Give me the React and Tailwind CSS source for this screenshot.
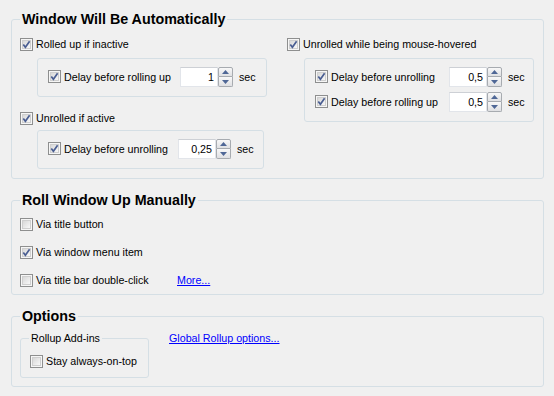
import React from 'react';

function Check({ checked }) {
  return (
    <svg width="13" height="13" viewBox="0 0 13 13" className="shrink-0">
      <defs>
        <linearGradient id="cbFill" x1="0" y1="0" x2="1" y2="1">
          <stop offset="0" stopColor="#d6d6d6" />
          <stop offset="1" stopColor="#fafafa" />
        </linearGradient>
      </defs>
      <rect x="0.5" y="0.5" width="12" height="12" fill="#f6f6f6" stroke="#8e8f8f" />
      <rect x="2.5" y="2.5" width="8" height="8" fill="url(#cbFill)" stroke="#cfcfcf" />
      {checked && (
        <path d="M3.3 6.4 L5.4 9.2 L9.6 3.3" fill="none" stroke="#4a5e92" strokeWidth="1.7" />
      )}
    </svg>
  );
}

const Row = ({ checked, label, className = '' }) => (
  <div className={`flex items-center h-[16px] gap-[3px] whitespace-nowrap ${className}`}>
    <Check checked={checked} />
    <span>{label}</span>
  </div>
);

function Spin({ value }) {
  return (
    <div className="flex h-[20px]">
      <div className="w-[38px] h-[20px] bg-white border border-[#e2e5ea] border-t-[#cdd0d5] text-right pr-[3px] leading-[18px]">
        {value}
      </div>
      <div className="flex flex-col w-[15px] h-[20px]">
        <div className="h-[10px] border border-[#a7abb0] rounded-t-[2px] bg-gradient-to-b from-[#f8f8f8] to-[#dfe0e3] flex items-center justify-center">
          <svg width="7" height="4" viewBox="0 0 7 4"><path d="M0 4 L3.5 0 L7 4Z" fill="#4f6796" /></svg>
        </div>
        <div className="h-[10px] border border-t-0 border-[#a7abb0] rounded-b-[2px] bg-gradient-to-b from-[#f8f8f8] to-[#dfe0e3] flex items-center justify-center">
          <svg width="7" height="4" viewBox="0 0 7 4"><path d="M0 0 L7 0 L3.5 4Z" fill="#4f6796" /></svg>
        </div>
      </div>
    </div>
  );
}

const DelayRow = ({ label, labelW, value, className = '' }) => (
  <div className={`flex items-center h-[20px] ${className}`}>
    <div className={`flex items-center gap-[3px] whitespace-nowrap ${labelW}`}>
      <Check checked />
      <span>{label}</span>
    </div>
    <Spin value={value} />
    <span className="ml-[6px]">sec</span>
  </div>
);

const Inner = ({ className = '', children }) => (
  <div className={`ml-[17px] border border-[#d5dfe5] rounded-[3px] pt-[8px] pb-[9px] pl-[10px] ${className}`}>
    {children}
  </div>
);

const Group = ({ title, className = '', children }) => (
  <fieldset className={`w-[533px] border border-[#d5dfe5] rounded-[3px] ${className}`}>
    <legend className="ml-[8px] px-[2px] text-[14.3px] font-bold leading-[16px]">{title}</legend>
    {children}
  </fieldset>
);

export default function App() {
  return (
    <div className="w-[554px] h-[396px] overflow-hidden bg-[#f0f0f0] pt-[11px] pl-[11px] text-[10.7px] text-black font-['Liberation_Sans',Arial,sans-serif]">
      <Group title="Window Will Be Automatically">
        <div className="flex pb-[9px]">
          <div className="w-[275px] pl-[8px] pt-[9px]">
            <Row checked label="Rolled up if inactive" />
            <Inner className="mt-[6px] w-[230px]">
              <DelayRow label="Delay before rolling up" labelW="w-[132px]" value="1" />
            </Inner>
            <Row checked label="Unrolled if active" className="mt-[13px]" />
            <Inner className="mt-[4px] w-[227px]">
              <DelayRow label="Delay before unrolling" labelW="w-[130px]" value="0,25" />
            </Inner>
          </div>
          <div className="pt-[9px]">
            <Row checked label="Unrolled while being mouse-hovered" />
            <Inner className="mt-[6px] w-[230px]">
              <DelayRow label="Delay before unrolling" labelW="w-[134px]" value="0,5" />
              <DelayRow label="Delay before rolling up" labelW="w-[134px]" value="0,5" className="mt-[5px]" />
            </Inner>
          </div>
        </div>
      </Group>

      <Group title="Roll Window Up Manually" className="mt-[13px]">
        <div className="pt-[2px] pl-[8px]">
          <div className="h-[28px] flex items-center"><Row label="Via title button" /></div>
          <div className="h-[28px] flex items-center"><Row checked label="Via window menu item" /></div>
          <div className="h-[28px] flex items-center">
            <div className="w-[157px]"><Row label="Via title bar double-click" /></div>
            <a href="#" className="text-[#0000ff] underline">More...</a>
          </div>
        </div>
      </Group>

      <Group title="Options" className="mt-[13px]">
        <div className="flex items-start pl-[8px] pb-[8px]">
          <fieldset className="w-[129px] mt-[8px] border border-[#d5dfe5] rounded-[3px]">
            <legend className="ml-[8px] px-[2px] leading-[13px]">Rollup Add-ins</legend>
            <div className="pl-[9px] mt-[8px] pb-[8px]">
              <Row label="Stay always-on-top" />
            </div>
          </fieldset>
          <a href="#" className="mt-[8px] ml-[20px] leading-[13px] text-[#0000ff] underline whitespace-nowrap">
            Global Rollup options...
          </a>
        </div>
      </Group>
    </div>
  );
}
